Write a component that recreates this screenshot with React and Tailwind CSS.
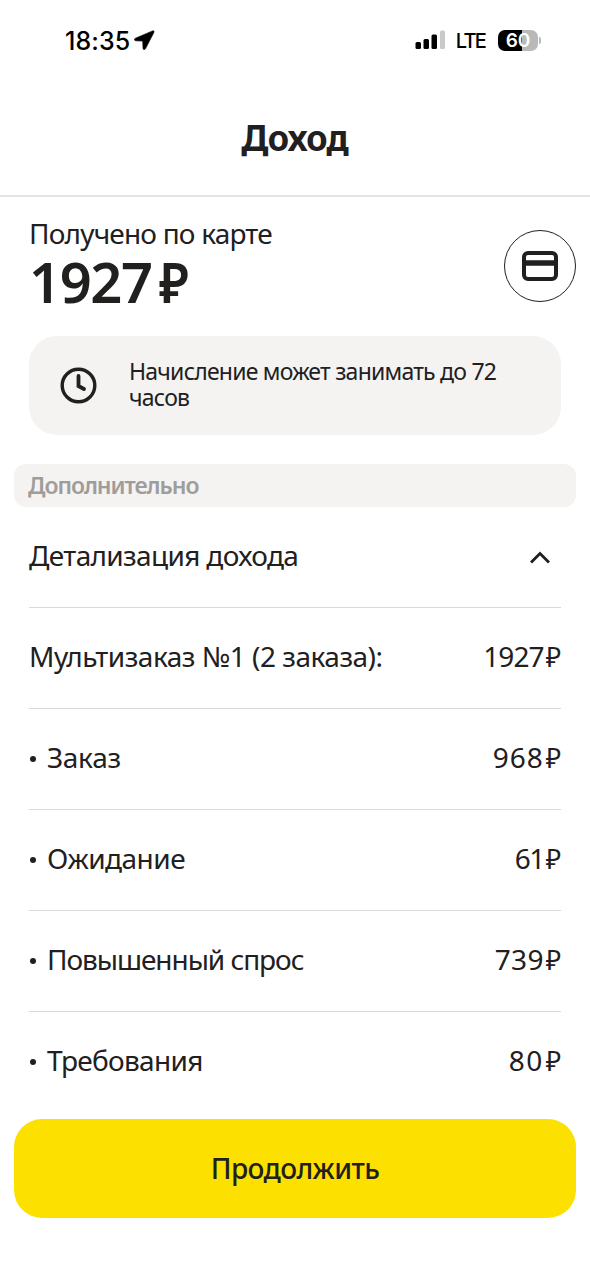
const rows = [
  { label: 'Мультизаказ №1 (2 заказа):', amount: '1927', labelClass: 'tracking-[-0.5px]', amountClass: 'tracking-[-0.9px]' },
  { label: 'Заказ', amount: '968', nested: true, labelClass: 'tracking-[-0.3px]', amountClass: 'tracking-[1px]' },
  { label: 'Ожидание', amount: '61', nested: true, labelClass: 'tracking-[-0.5px]', amountClass: 'tracking-[-1.6px]' },
  { label: 'Повышенный спрос', amount: '739', nested: true, labelClass: 'tracking-[-1.05px]', amountClass: 'tracking-[0.3px]' },
  { label: 'Требования', amount: '80', nested: true, labelClass: 'tracking-[-0.7px]', amountClass: 'tracking-[1.4px]' },
]

function StatusBar() {
  return (
    <div className="flex h-20 items-center justify-between pl-[65px] pr-[49px] font-['Inter',sans-serif] text-black">
      <div className="flex items-center gap-[4px]">
        <span className="mt-0.5 text-[25px] font-medium leading-none tracking-[0.1px]">18:35</span>
        <svg width="21" height="20" viewBox="0 0 21 20" fill="currentColor">
          <path d="M18.5.9 1.4 8.2C-.1 8.9.2 10.7 1.7 10.8l7 .3.3 7.2c.1 1.6 1.9 1.8 2.6.3L19.9 2.4C20.4 1.2 19.6.4 18.5.9Z" stroke="currentColor" strokeWidth="0.6" />
        </svg>
      </div>
      <div className="flex items-center">
        <svg width="31" height="20" viewBox="0 0 31 20" fill="currentColor">
          <rect x="0.5" y="12" width="5.5" height="7" rx="1.5" />
          <rect x="8.5" y="9" width="5.5" height="10" rx="1.5" />
          <rect x="16.5" y="4.5" width="5.5" height="14.5" rx="1.5" />
          <rect x="25" y="0.5" width="5" height="18.5" rx="1.5" fill="#c9c9c9" />
        </svg>
        <span className="ml-[10px] mt-0.5 text-xl font-medium leading-none tracking-[-1.8px]">LTE</span>
        <div className="ml-[13px] flex h-[21px] w-10 items-center justify-center rounded-[7px] bg-linear-to-r from-black from-60% to-[#b9b9b9] to-60% text-[19px] font-semibold leading-none text-white">
          60
        </div>
        <div className="ml-px h-[7px] w-[2px] rounded-r-full bg-[#b9b9b9]" />
      </div>
    </div>
  )
}

function Row({ label, amount, nested, labelClass, amountClass }) {
  return (
    <div className="flex h-[101px] items-center justify-between border-t border-[#d9d9d9] pb-1 text-[28px]">
      <div className="flex items-center">
        {nested && <span className="mr-[11px] ml-px mt-1 size-[6px] rounded-full bg-[#21201f]" />}
        <span className={labelClass}>{label}</span>
      </div>
      <div className="flex items-center gap-px">
        <span className={amountClass}>{amount}</span>
        <span className="origin-right scale-x-95">₽</span>
      </div>
    </div>
  )
}

export default function App() {
  return (
    <div className="flex h-[1280px] w-[590px] flex-col overflow-hidden bg-white font-['Noto_Sans',sans-serif] text-[#21201f]">
      <StatusBar />

      <header className="flex h-[117px] items-center justify-center border-b-2 border-[#e4e4e4]">
        <h1 className="pr-px text-[35px] font-bold leading-none tracking-[-1px]">Доход</h1>
      </header>

      {/* Сумма на карту */}
      <section className="flex h-[139px] items-start justify-between pl-[29px] pr-[14px]">
        <div className="pt-[18px]">
          <p className="text-[28px] leading-9 tracking-[-0.8px]">Получено по карте</p>
          <p className="flex items-center gap-[7px] text-[56px] font-semibold leading-[60px]">
            <span className="tracking-[-1.4px]">1927</span>
            <span className="origin-left scale-x-90">₽</span>
          </p>
        </div>
        <button className="mt-[33px] flex size-[72px] items-center justify-center rounded-full border border-[#21201f]">
          <svg width="36" height="30" viewBox="0 0 36 30" fill="none" stroke="currentColor" strokeWidth="4">
            <rect x="2" y="2" width="32" height="26" rx="4" />
            <path d="M2 12h32" strokeWidth="5.5" />
          </svg>
        </button>
      </section>

      <div className="mx-[29px] flex h-[99px] items-center rounded-[28px] bg-[#f4f3f1] pl-[31px]">
        <svg width="38" height="38" viewBox="0 0 38 38" fill="none" stroke="currentColor" strokeWidth="3.4">
          <circle cx="18.5" cy="18.5" r="16.3" />
          <path d="M18.5 9v10l5.5 3" strokeWidth="3.8" strokeLinecap="round" />
        </svg>
        <p className="ml-[31px] w-[390px] pb-1 text-[23px] leading-[26px] tracking-[-0.77px]">
          Начисление может занимать до 72 часов
        </p>
      </div>

      <div className="mx-[14px] mt-[29px] flex h-[43px] items-center rounded-xl bg-[#f4f3f1] px-[14px] text-[23px] font-semibold tracking-[-1.05px] text-[#9e9d9b]">
        Дополнительно
      </div>

      <section className="px-[29px]">
        <button className="flex h-[100px] w-full items-center justify-between pr-[11px] text-[28px]">
          <span className="pb-1 tracking-[-0.65px]">Детализация дохода</span>
          <svg width="20" height="13" viewBox="0 0 20 13" fill="none" stroke="currentColor" strokeWidth="2.8">
            <path d="m1 11.5 9-9 9 9" />
          </svg>
        </button>
        {rows.map((row) => (
          <Row key={row.label} {...row} />
        ))}
      </section>

      <button className="mx-[14px] mt-[7px] h-[99px] shrink-0 rounded-[28px] bg-[#fce000] pb-0.5 text-[28px] font-medium tracking-[-0.6px]">
        Продолжить
      </button>
    </div>
  )
}
